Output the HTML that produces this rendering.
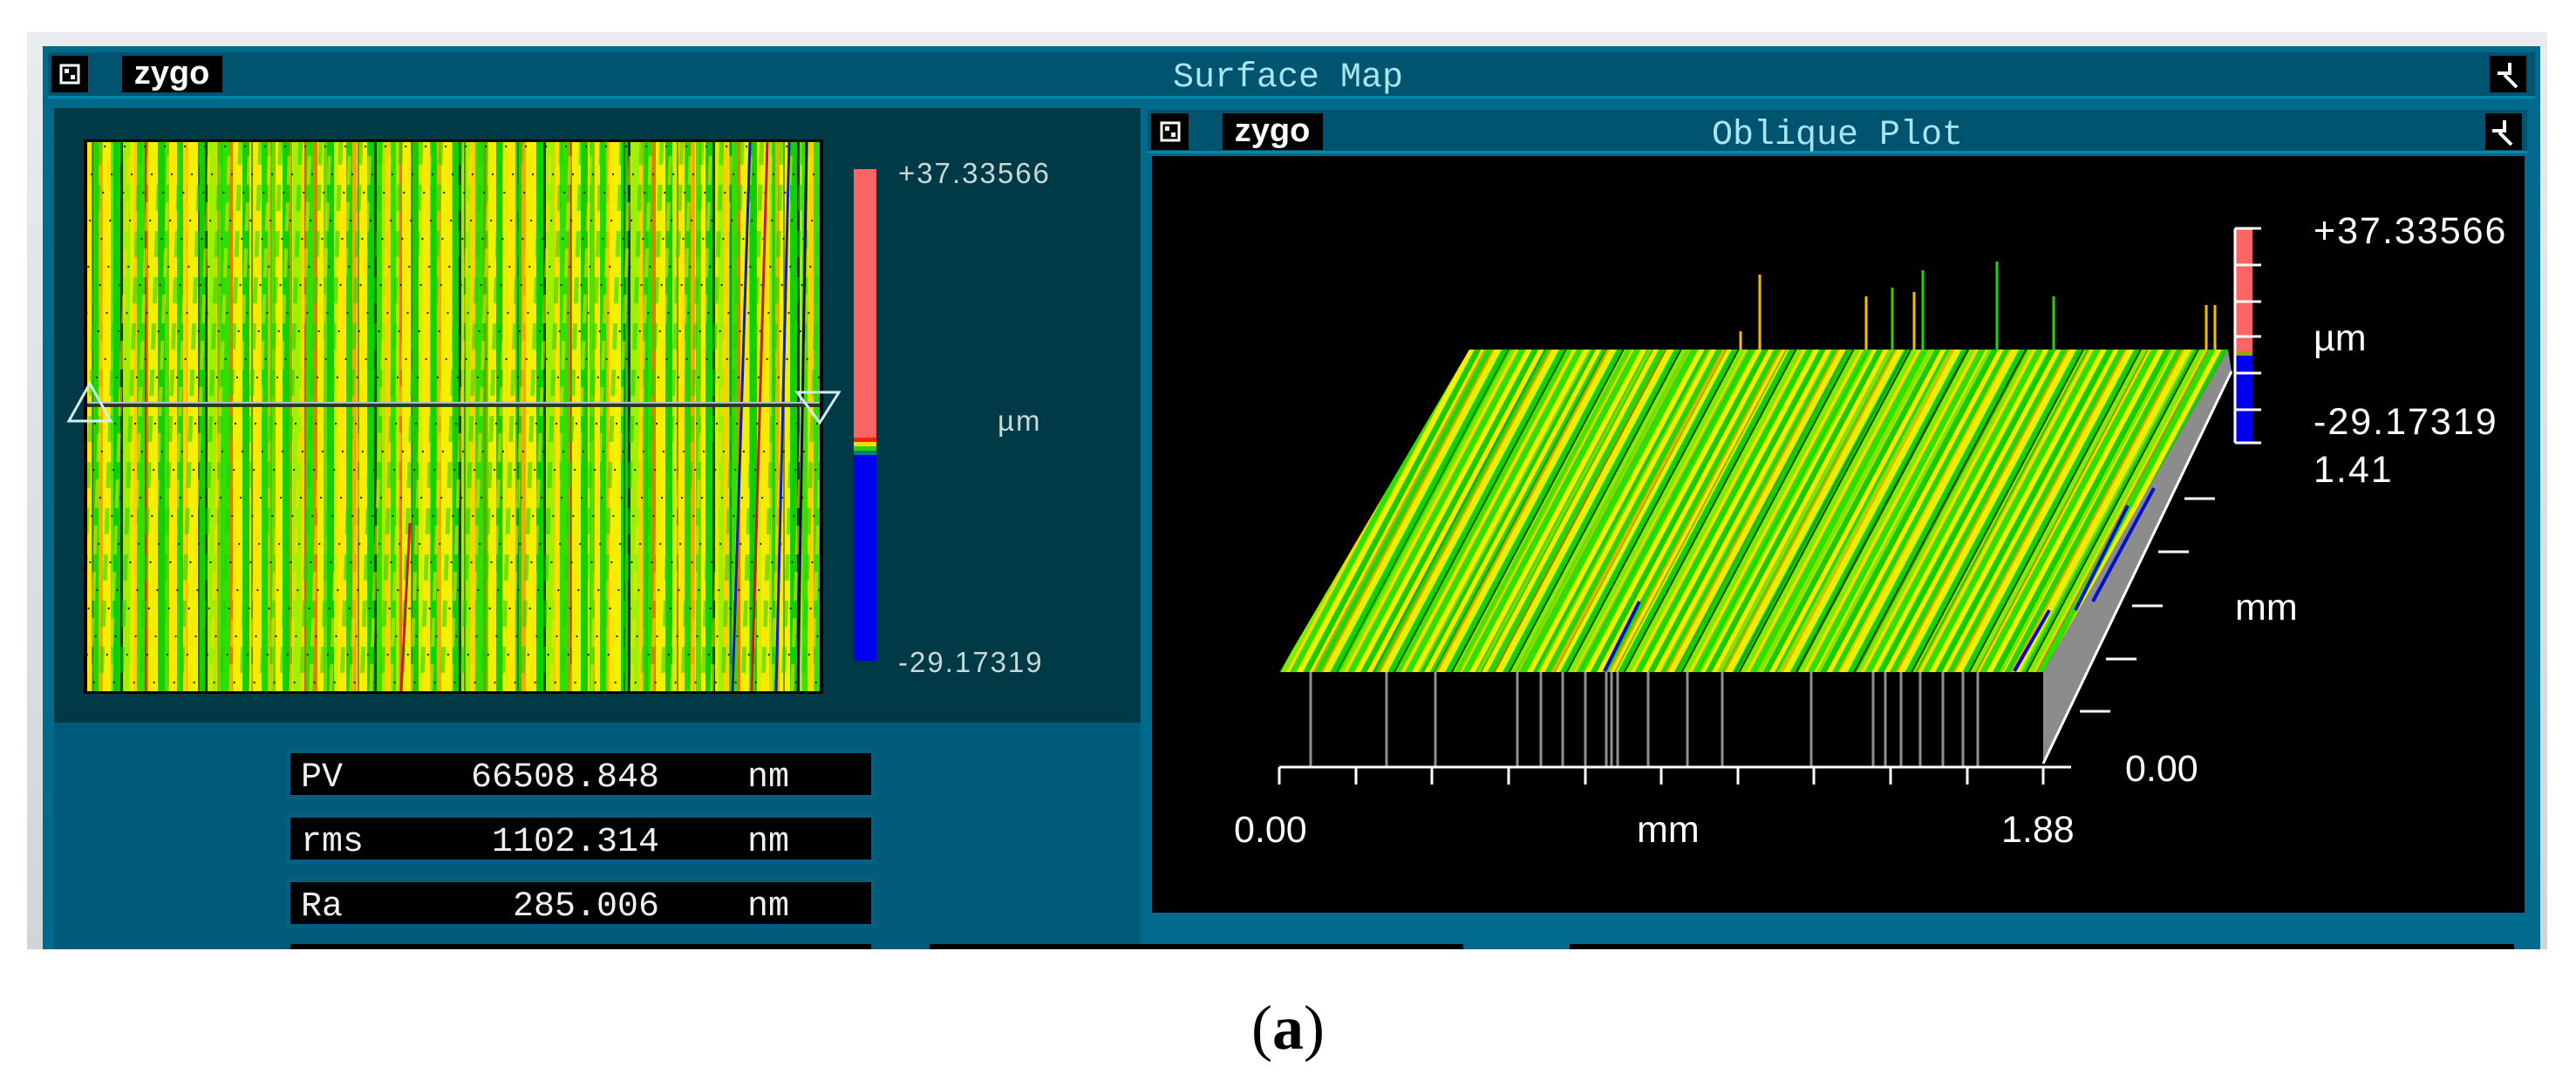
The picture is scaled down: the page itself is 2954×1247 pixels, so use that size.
<!DOCTYPE html>
<html><head><meta charset="utf-8"><style>
html,body{margin:0;padding:0;background:#fff;width:2954px;height:1247px;overflow:hidden}
svg{display:block}
</style></head><body>
<svg width="2954" height="1247" viewBox="0 0 2954 1247" xmlns="http://www.w3.org/2000/svg">
<defs>
<pattern id="s1" width="97" height="40" patternUnits="userSpaceOnUse">
<rect width="97" height="40" fill="#c8e600"/>
<rect x="0" width="9" height="40" fill="#ffe800"/>
<rect x="9" width="7" height="40" fill="#20d800"/>
<rect x="16" width="5" height="40" fill="#e8b000"/>
<rect x="21" width="12" height="40" fill="#f4f000"/>
<rect x="33" width="8" height="40" fill="#10d000"/>
<rect x="41" width="3" height="40" fill="#104010"/>
<rect x="44" width="10" height="40" fill="#a0f000"/>
<rect x="54" width="6" height="40" fill="#ffd000"/>
<rect x="60" width="9" height="40" fill="#30e000"/>
<rect x="69" width="4" height="40" fill="#e08000"/>
<rect x="73" width="11" height="40" fill="#f0f000"/>
<rect x="84" width="8" height="40" fill="#18cc00"/>
<rect x="92" width="5" height="40" fill="#d0f000"/>
</pattern>
<pattern id="s2" width="61" height="40" patternUnits="userSpaceOnUse">
<rect x="5" width="6" height="40" fill="#00d000" opacity=".6"/>
<rect x="27" width="4" height="40" fill="#ffee00" opacity=".6"/>
<rect x="44" width="2" height="40" fill="#203000" opacity=".5"/>
</pattern>
<pattern id="s3" width="23" height="53" patternUnits="userSpaceOnUse" patternTransform="skewX(-2)">
<rect x="3" y="0" width="5" height="30" fill="#18d400" opacity=".55"/>
<rect x="14" y="20" width="4" height="33" fill="#ffe000" opacity=".55"/>
<rect x="10" y="8" width="2" height="2" fill="#102000"/>
<rect x="19" y="40" width="2" height="2" fill="#102000"/>
</pattern>
<pattern id="o2" href="#s2" patternTransform="rotate(28)"/>
<pattern id="o1b" width="97" height="40" patternUnits="userSpaceOnUse" patternTransform="rotate(28) scale(0.6)">
<rect width="97" height="40" fill="#b8e400"/>
<rect x="0" width="9" height="40" fill="#ffe800"/>
<rect x="9" width="10" height="40" fill="#20d800"/>
<rect x="19" width="4" height="40" fill="#e8a000"/>
<rect x="23" width="12" height="40" fill="#e8f000"/>
<rect x="35" width="10" height="40" fill="#10d000"/>
<rect x="45" width="3" height="40" fill="#103010"/>
<rect x="48" width="10" height="40" fill="#80ec00"/>
<rect x="58" width="6" height="40" fill="#ffd800"/>
<rect x="64" width="12" height="40" fill="#30e000"/>
<rect x="76" width="10" height="40" fill="#f0f000"/>
<rect x="86" width="11" height="40" fill="#18cc00"/>
</pattern>
<linearGradient id="frame" x1="0" y1="0" x2="0" y2="1"><stop offset="0" stop-color="#e8ecef"/><stop offset="1" stop-color="#cfd6da"/></linearGradient>
</defs>

<rect x="31" y="37" width="2890" height="1052" fill="url(#frame)"/>
<rect x="49" y="53" width="2864" height="1036" fill="#006a8c"/>
<rect x="55" y="60" width="2852" height="52" fill="#00546f"/>
<rect x="55" y="110" width="2852" height="3" fill="#0088a8"/>
<rect x="59" y="64" width="42" height="42" fill="#000"/>
<g fill="#fff"><rect x="70" y="75" width="20" height="20" fill="none" stroke="#fff" stroke-width="3"/><rect x="74" y="79" width="5" height="5"/><rect x="81" y="86" width="5" height="5"/></g>
<rect x="140" y="64" width="115" height="42" fill="#000"/>
<text x="197" y="96" font-family="Liberation Sans, sans-serif" font-weight="bold" font-size="38" fill="#fff" text-anchor="middle">zygo</text>
<text x="1477" y="99" font-family="Liberation Mono, monospace" font-size="40" fill="#a8e4f2" text-anchor="middle">Surface Map</text>
<rect x="2855" y="64" width="42" height="42" fill="#000"/>
<path d="M2864 84h14v-12M2872 86l14 14" stroke="#fff" stroke-width="4" fill="none"/>

<rect x="62" y="124" width="1246" height="705" fill="#003a46"/>
<rect x="62" y="829" width="1246" height="260" fill="#005a7a"/>
<rect x="96" y="160" width="848" height="636" fill="#000"/>
<rect x="100" y="163" width="840" height="630" fill="url(#s1)"/>
<rect x="100" y="163" width="840" height="630" fill="url(#s2)"/>
<rect x="100" y="163" width="840" height="630" fill="url(#s3)"/>
<g stroke-width="3">
<line x1="860" y1="163" x2="840" y2="793" stroke="#1020a0"/>
<line x1="880" y1="163" x2="862" y2="793" stroke="#c02020"/>
<line x1="905" y1="163" x2="890" y2="793" stroke="#1020c0"/>
<line x1="925" y1="163" x2="915" y2="793" stroke="#101040"/>
<line x1="470" y1="600" x2="460" y2="793" stroke="#c02020"/>
</g>
<line x1="100" y1="465" x2="940" y2="465" stroke="#2a3a20" stroke-width="4"/>
<line x1="100" y1="462" x2="940" y2="462" stroke="#b0c0c0" stroke-width="2"/>
<path d="M103 440L79 483H127Z" fill="none" stroke="#d0f0f0" stroke-width="3"/>
<path d="M914 450H962L940 485Z" fill="none" stroke="#d0f0f0" stroke-width="3"/>
<rect x="979" y="194" width="26" height="308" fill="#ff6464"/>
<rect x="979" y="502" width="26" height="5" fill="#ff2000"/>
<rect x="979" y="507" width="26" height="5" fill="#f0e000"/>
<rect x="979" y="512" width="26" height="5" fill="#30d000"/>
<rect x="979" y="517" width="26" height="5" fill="#008080"/>
<rect x="979" y="522" width="26" height="236" fill="#0000f0"/>
<g font-family="Liberation Sans, sans-serif" font-size="33" fill="#c8d8d8" letter-spacing="2">
<text x="1030" y="210">+37.33566</text>
<text x="1144" y="494">µm</text>
<text x="1030" y="771">-29.17319</text>
</g>
<g>
<rect x="328" y="859" width="676" height="58" fill="#00607e"/>
<rect x="333" y="864" width="666" height="48" fill="#000"/>
<rect x="328" y="933" width="676" height="58" fill="#00607e"/>
<rect x="333" y="938" width="666" height="48" fill="#000"/>
<rect x="328" y="1007" width="676" height="58" fill="#00607e"/>
<rect x="333" y="1012" width="666" height="48" fill="#000"/>
<rect x="333" y="1083" width="666" height="6" fill="#000"/>
</g>
<g font-family="Liberation Mono, monospace" font-size="40" fill="#f0f0f0">
<text x="345" y="902">PV</text><text x="756" y="902" text-anchor="end">66508.848</text><text x="857" y="902">nm</text>
<text x="345" y="976">rms</text><text x="756" y="976" text-anchor="end">1102.314</text><text x="857" y="976">nm</text>
<text x="345" y="1050">Ra</text><text x="756" y="1050" text-anchor="end">285.006</text><text x="857" y="1050">nm</text>
</g>

<rect x="1314" y="120" width="1588" height="930" fill="#006a8c"/>
<rect x="1316" y="126" width="1582" height="48" fill="#00546f"/>
<rect x="1316" y="173" width="1582" height="3" fill="#0088a8"/>
<rect x="1320" y="130" width="43" height="42" fill="#000"/>
<g fill="#fff"><rect x="1332" y="141" width="20" height="20" fill="none" stroke="#fff" stroke-width="3"/><rect x="1336" y="145" width="5" height="5"/><rect x="1343" y="152" width="5" height="5"/></g>
<rect x="1402" y="130" width="115" height="42" fill="#000"/>
<text x="1459" y="162" font-family="Liberation Sans, sans-serif" font-weight="bold" font-size="38" fill="#fff" text-anchor="middle">zygo</text>
<text x="2107" y="165" font-family="Liberation Mono, monospace" font-size="40" fill="#a8e4f2" text-anchor="middle">Oblique Plot</text>
<rect x="2850" y="130" width="42" height="42" fill="#000"/>
<path d="M2858 150h14v-12M2866 152l14 14" stroke="#fff" stroke-width="4" fill="none"/>
<rect x="1321" y="179" width="1574" height="868" fill="#000"/>
<rect x="1066" y="1083" width="612" height="6" fill="#000"/>
<rect x="1800" y="1083" width="1083" height="6" fill="#000"/>

<polygon points="2555,401 2559,426 2343,876 2343,771" fill="#8c8c8c"/>
<polygon points="1685,401 2555,401 2343,771 1467,771" fill="url(#o1b)"/>
<polygon points="1685,401 2555,401 2343,771 1467,771" fill="url(#o2)" opacity=".7"/>
<g stroke-width="4">
<line x1="2440" y1="580" x2="2380" y2="700" stroke="#0010d0"/>
<line x1="2470" y1="560" x2="2400" y2="690" stroke="#0010d0"/>
<line x1="2350" y1="700" x2="2310" y2="770" stroke="#0010d0"/>
<line x1="1880" y1="690" x2="1840" y2="770" stroke="#0010d0"/>
</g>
<g stroke="#909090" stroke-width="3">
<line x1="1503" y1="771" x2="1503" y2="880"/><line x1="1590" y1="771" x2="1590" y2="880"/><line x1="1646" y1="771" x2="1646" y2="880"/>
<line x1="1740" y1="771" x2="1740" y2="880"/><line x1="1767" y1="771" x2="1767" y2="880"/><line x1="1792" y1="771" x2="1792" y2="880"/>
<line x1="1818" y1="771" x2="1818" y2="880"/><line x1="1842" y1="771" x2="1842" y2="880"/><line x1="1848" y1="771" x2="1848" y2="880"/>
<line x1="1855" y1="771" x2="1855" y2="880"/><line x1="1890" y1="771" x2="1890" y2="880"/><line x1="1935" y1="771" x2="1935" y2="880"/>
<line x1="1975" y1="771" x2="1975" y2="880"/><line x1="2077" y1="771" x2="2077" y2="880"/><line x1="2148" y1="771" x2="2148" y2="880"/>
<line x1="2162" y1="771" x2="2162" y2="880"/><line x1="2180" y1="771" x2="2180" y2="880"/><line x1="2202" y1="771" x2="2202" y2="880"/>
<line x1="2228" y1="771" x2="2228" y2="880"/><line x1="2251" y1="771" x2="2251" y2="880"/><line x1="2268" y1="771" x2="2268" y2="880"/>
</g>
<g stroke-width="3">
<line x1="2018" y1="401" x2="2018" y2="315" stroke="#f0c000"/>
<line x1="2140" y1="401" x2="2140" y2="340" stroke="#f0c000"/>
<line x1="2170" y1="401" x2="2170" y2="330" stroke="#30d000"/>
<line x1="2195" y1="401" x2="2195" y2="335" stroke="#f0c000"/>
<line x1="2205" y1="401" x2="2205" y2="310" stroke="#30d000"/>
<line x1="2290" y1="401" x2="2290" y2="300" stroke="#30d000"/>
<line x1="2355" y1="401" x2="2355" y2="340" stroke="#30d000"/>
<line x1="2530" y1="401" x2="2530" y2="350" stroke="#f0c000"/>
<line x1="2540" y1="401" x2="2540" y2="350" stroke="#f0c000"/>
<line x1="1996" y1="401" x2="1996" y2="380" stroke="#f0c000"/>
</g>
<g stroke="#fff" stroke-width="3" fill="none">
<line x1="1467" y1="880" x2="2375" y2="880"/>
<path d="M1467 880v20M1555 880v20M1642 880v20M1730 880v20M1818 880v20M1905 880v20M1993 880v20M2080 880v20M2168 880v20M2256 880v20M2343 880v20"/>
<line x1="2343" y1="876" x2="2559" y2="426"/>
<path d="M2385 816h35M2415 756h35M2445 695h35M2475 633h35M2505 572h35"/>
</g>
<rect x="2563" y="262" width="20" height="141" fill="#ff6464"/>
<rect x="2563" y="403" width="20" height="5" fill="#a0a000"/>
<rect x="2563" y="408" width="20" height="100" fill="#0000f0"/>
<g stroke="#fff" stroke-width="3"><line x1="2563" y1="262" x2="2563" y2="508"/><path d="M2563 262h30M2563 304h30M2563 346h30M2563 386h30M2563 428h30M2563 470h30M2563 508h30"/></g>
<g font-family="Liberation Sans, sans-serif" font-size="43" fill="#fff">
<text x="2653" y="279" letter-spacing="2">+37.33566</text>
<text x="2653" y="402">µm</text>
<text x="2653" y="498" letter-spacing="2">-29.17319</text>
<text x="2653" y="553" letter-spacing="2">1.41</text>
<text x="2563" y="711">mm</text>
<text x="2437" y="896">0.00</text>
<text x="1415" y="966">0.00</text>
<text x="1877" y="966">mm</text>
<text x="2295" y="966">1.88</text>
</g>

<text x="1477" y="1203" font-family="Liberation Serif, serif" font-size="72" fill="#000" text-anchor="middle">(<tspan font-weight="bold">a</tspan>)</text>
</svg>
</body></html>
